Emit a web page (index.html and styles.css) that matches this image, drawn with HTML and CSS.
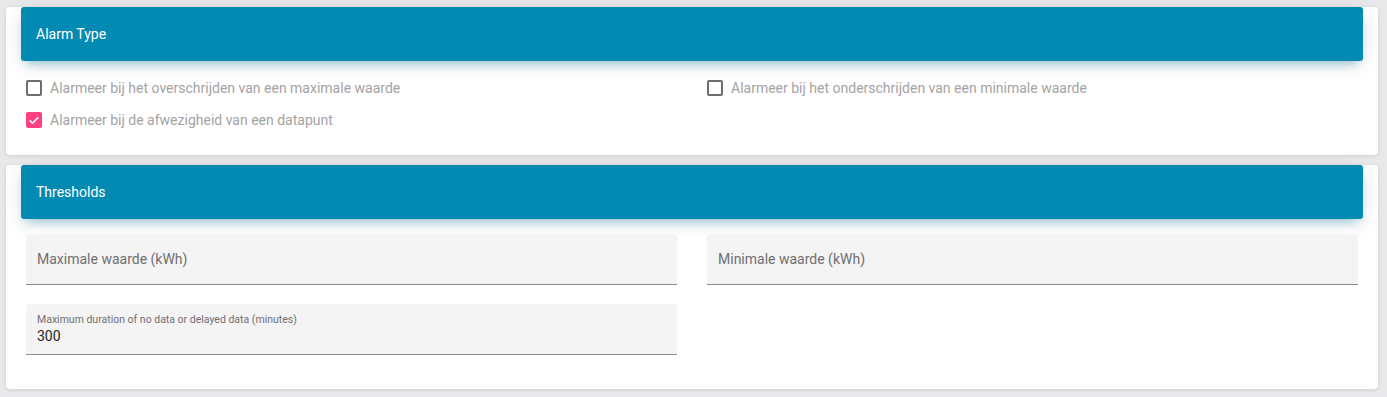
FILE: index.html
```html
<!DOCTYPE html>
<html lang="nl">
<head>
<meta charset="utf-8">
<title>Alarm</title>
<link rel="stylesheet" href="styles.css">
</head>
<body>
<div class="page">
  <section class="card card-type">
    <div class="card-header">Alarm Type</div>
    <div class="card-body">
      <div class="grid">
        <label class="check"><span class="box"></span><span class="check-text">Alarmeer bij het overschrijden van een maximale waarde</span></label>
        <label class="check"><span class="box"></span><span class="check-text">Alarmeer bij het onderschrijden van een minimale waarde</span></label>
        <label class="check"><span class="box checked"><svg viewBox="0 0 16 16" width="16" height="16"><path d="M3.6 8.2 L6.6 11.1 L12.4 5.2" fill="none" stroke="#fff" stroke-width="1.5"/></svg></span><span class="check-text">Alarmeer bij de afwezigheid van een datapunt</span></label>
      </div>
    </div>
  </section>

  <section class="card card-thresholds">
    <div class="card-header">Thresholds</div>
    <div class="card-body">
      <div class="grid fields">
        <div class="field"><span class="placeholder">Maximale waarde (kWh)</span></div>
        <div class="field"><span class="placeholder">Minimale waarde (kWh)</span></div>
        <div class="field filled"><span class="float-label">Maximum duration of no data or delayed data (minutes)</span><span class="value">300</span></div>
      </div>
    </div>
  </section>
</div>
</body>
</html>
```

FILE: styles.css
```css
* { box-sizing: border-box; }
html, body { margin: 0; padding: 0; }
body {
  background: #e9e8ea;
  font-family: Roboto, "Liberation Sans", Arial, sans-serif;
  width: 1387px;
  height: 397px;
  overflow: hidden;
}
.page {
  padding: 27px 9px 0 6px;
}
.card {
  background: #fff;
  border-radius: 4px;
  box-shadow: 0 1px 4px rgba(0, 0, 0, 0.12);
}
.card + .card { margin-top: 30px; }
.card-header {
  margin: -20px 15px 0;
  height: 54px;
  background: #038ab2;
  border-radius: 3px;
  color: #fff;
  font-size: 14px;
  line-height: 54px;
  padding-left: 15px;
  box-shadow: 0 4px 20px 0 rgba(0, 0, 0, 0.10), 0 7px 10px -5px rgba(3, 138, 178, 0.4);
}
.card-body { padding: 0 20px; }
.card-type .card-body { padding-top: 11px; padding-bottom: 19px; }
.card-thresholds .card-body { padding-top: 15px; padding-bottom: 34px; }
.grid {
  display: grid;
  grid-template-columns: 1fr 1fr;
  column-gap: 30px;
}
.check {
  display: flex;
  align-items: center;
  height: 32px;
  gap: 8px;
  font-size: 14px;
  color: #a3a3a3;
}
.box {
  width: 16px;
  height: 16px;
  border: 2px solid #6e6e6e;
  border-radius: 2px;
  flex: none;
  position: relative;
}
.box.checked {
  background: #ff4081;
  border-color: #ff4081;
}
.box svg { position: absolute; left: -2px; top: -2px; }
.fields { row-gap: 19px; }
.field {
  height: 51px;
  background: #f4f4f4;
  border-radius: 4px 4px 0 0;
  border-bottom: 1px solid #8c8c8c;
  padding: 0 11px;
  display: flex;
  flex-direction: column;
  justify-content: center;
}
.placeholder {
  font-size: 14px;
  color: #6f6f73;
}
.filled { justify-content: flex-start; padding-top: 9px; }
.float-label {
  font-size: 10.5px;
  color: #6f6f73;
  line-height: 14px;
}
.value {
  font-size: 14px;
  color: #222;
  line-height: 18px;
}
```
